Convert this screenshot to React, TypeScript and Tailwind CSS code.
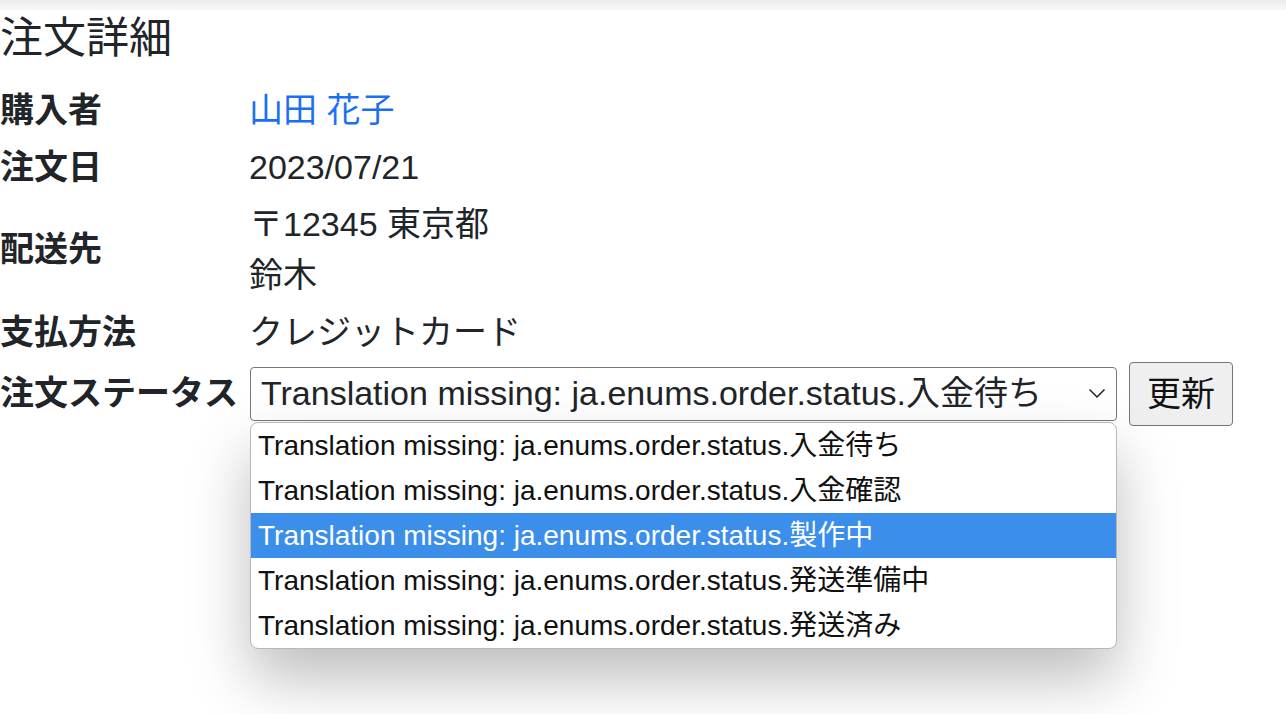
import React from "react";

const FONT = { fontFamily: '"Liberation Sans", "Noto Sans CJK JP", sans-serif' };

const options = [
  "Translation missing: ja.enums.order.status.入金待ち",
  "Translation missing: ja.enums.order.status.入金確認",
  "Translation missing: ja.enums.order.status.製作中",
  "Translation missing: ja.enums.order.status.発送準備中",
  "Translation missing: ja.enums.order.status.発送済み",
];

function Row({ label, children, last }: { label: string; children: React.ReactNode; last?: boolean }) {
  return (
    <tr>
      <th className={"w-[249px] pl-0 pr-0 text-left align-middle font-bold whitespace-nowrap " + (last ? "pt-[1px] pb-[3px]" : "py-[3px]")}>{label}</th>
      <td className={"px-0 align-middle " + (last ? "pt-[1px] pb-[3px]" : "py-[3px]")}>{children}</td>
    </tr>
  );
}

export default function App() {
  return (
    <div className="min-h-[714px] w-full bg-white text-[#212529]" style={FONT}>
      <div className="h-[10px] w-full bg-gradient-to-b from-[#ececec] to-[#f8f8f8]" />
      <h5 className="text-[43px] leading-[1.2] mt-[3px] mb-[17px] font-normal">注文詳細</h5>
      <table className="text-[34px] leading-[51px] border-collapse">
        <tbody>
          <Row label="購入者">
            <span className="text-[#1a70f5]">山田 花子</span>
          </Row>
          <Row label="注文日">2023/07/21</Row>
          <Row label="配送先">
            <div>〒12345 東京都</div>
            <div>鈴木</div>
          </Row>
          <Row label="支払方法">クレジットカード</Row>
          <Row label="注文ステータス" last>
            <div className="flex items-center gap-[12px] pl-[1px]">
              <div className="relative">
                <div className="flex h-[54px] w-[867px] items-center justify-between rounded-[4px] border border-[#767676] bg-white pl-[10px] pr-[10px]">
                  <span className="whitespace-nowrap">{options[0]}</span>
                  <svg width="18" height="11" viewBox="0 0 18 11" fill="none">
                    <path d="M1.5 1.5 L9 9 L16.5 1.5" stroke="#222" strokeWidth="1.5" />
                  </svg>
                </div>
                <div className="absolute left-0 top-full mt-[1px] w-[867px] overflow-hidden rounded-[8px] border border-[#b8b8b8] bg-white shadow-[0_30px_60px_rgba(0,0,0,0.26)] z-10">
                  {options.map((o, i) => (
                    <div
                      key={o}
                      className={
                        "h-[45px] pl-[7px] text-[28px] leading-[45px] whitespace-nowrap " +
                        (i === 2 ? "bg-[#3b8eea] text-white" : "text-[#111]")
                      }
                    >
                      {o}
                    </div>
                  ))}
                </div>
              </div>
              <button className="h-[64px] rounded-[4px] border border-[#767676] bg-[#efefef] px-[17px] text-[34px] leading-[1] text-[#111]">
                更新
              </button>
            </div>
          </Row>
        </tbody>
      </table>
    </div>
  );
}
